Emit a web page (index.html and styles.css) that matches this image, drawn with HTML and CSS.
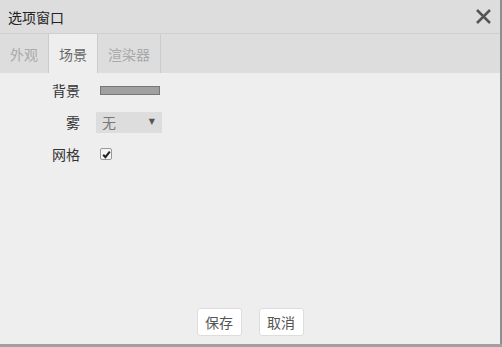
FILE: index.html
```html
<!DOCTYPE html>
<html lang="zh">
<head>
<meta charset="utf-8">
<link rel="stylesheet" href="styles.css">
</head>
<body>
<div class="screen">
  <div class="row">
    <div class="dialog">
      <div class="titlebar">
        <span class="title">选项窗口</span>
        <svg class="close" width="15" height="15" viewBox="0 0 15 15"><path d="M1 1 L14 14 M14 1 L1 14" stroke="#555" stroke-width="2.5" fill="none"/></svg>
      </div>
      <div class="tabs">
        <div class="tab">外观</div>
        <div class="tab active">场景</div>
        <div class="tab">渲染器</div>
      </div>
      <div class="content">
        <div class="label">背景</div>
        <div class="swatch"></div>
        <div class="label">雾</div>
        <div class="select"><span>无</span><span class="arrow">▼</span></div>
        <div class="label">网格</div>
        <div class="check"><svg width="9" height="9" viewBox="0 0 9 9"><path d="M1.2 4.8 L3.4 7.2 L7.8 1.6" stroke="#222" stroke-width="2" fill="none"/></svg></div>
      </div>
      <div class="footer">
        <button class="btn">保存</button>
        <button class="btn">取消</button>
      </div>
    </div>
    <div class="edge"></div>
  </div>
  <div class="bottom"></div>
</div>
</body>
</html>
```
FILE: styles.css
```css
html, body { margin: 0; padding: 0; }
body {
  width: 502px; height: 347px; overflow: hidden;
  font-family: "Noto Sans CJK SC", "Noto Sans", sans-serif;
  font-size: 14px;
  background: #a0a0a0;
}
.screen { display: flex; flex-direction: column; height: 347px; }
.row { display: flex; height: 344px; }
.dialog {
  width: 500px; height: 344px;
  background: #eeeeee;
  display: flex; flex-direction: column;
}
.edge { width: 2px; background: #8e8e8e; }
.bottom { height: 3px; background: #a0a0a0; }

.titlebar {
  height: 33px; border-bottom: 1px solid #cfcfcf;
  background: #dddddd;
  display: flex; align-items: center; justify-content: space-between;
  padding: 0 9px 0 8px;
}
.title { color: #222; font-size: 14px; line-height: 16px; }
.close { display: block; }

.tabs {
  height: 39px; background: #dddddd;
  display: flex;
}
.tab {
  padding: 0 10px; border-right: 1px solid #cccccc;
  display: flex; align-items: center;
  color: #aaaaaa; line-height: 16px;
}
.tab.active { background: #eeeeee; color: #666666; }

.content {
  flex: 1;
  padding-top: 1px;
  display: grid;
  grid-template-columns: 80px auto;
  grid-auto-rows: 32px;
  column-gap: 16px;
  align-items: center;
  justify-items: start;
  align-content: start;
}
.label { justify-self: end; color: #333; line-height: 16px; }
.swatch {
  margin-left: 4px; width: 60px; height: 9px; box-sizing: border-box;
  background: #a0a0a0; border: 1px solid #777;
}
.select {
  width: 66px; height: 21px; box-sizing: border-box;
  background: #dddddd; color: #777;
  display: flex; align-items: center; justify-content: space-between;
  padding: 0 7px 0 6px; line-height: 16px;
}
.arrow { font-size: 8px; color: #555; font-family: "DejaVu Sans", sans-serif; }
.check {
  margin-left: 4px; width: 12px; height: 12px; box-sizing: border-box;
  border: 1px solid #999; border-radius: 2px; background: #f4f4f4;
  display: flex; align-items: center; justify-content: center;
}
.check svg { display: block; }

.footer {
  display: flex; justify-content: center; gap: 17px;
  padding-bottom: 8px;
}
.btn {
  width: 45px; height: 28px; box-sizing: border-box;
  background: #ffffff; border: 1px solid #dddddd; border-radius: 3px;
  font-family: inherit; font-size: 14px; color: #555; padding: 0;
}
```
